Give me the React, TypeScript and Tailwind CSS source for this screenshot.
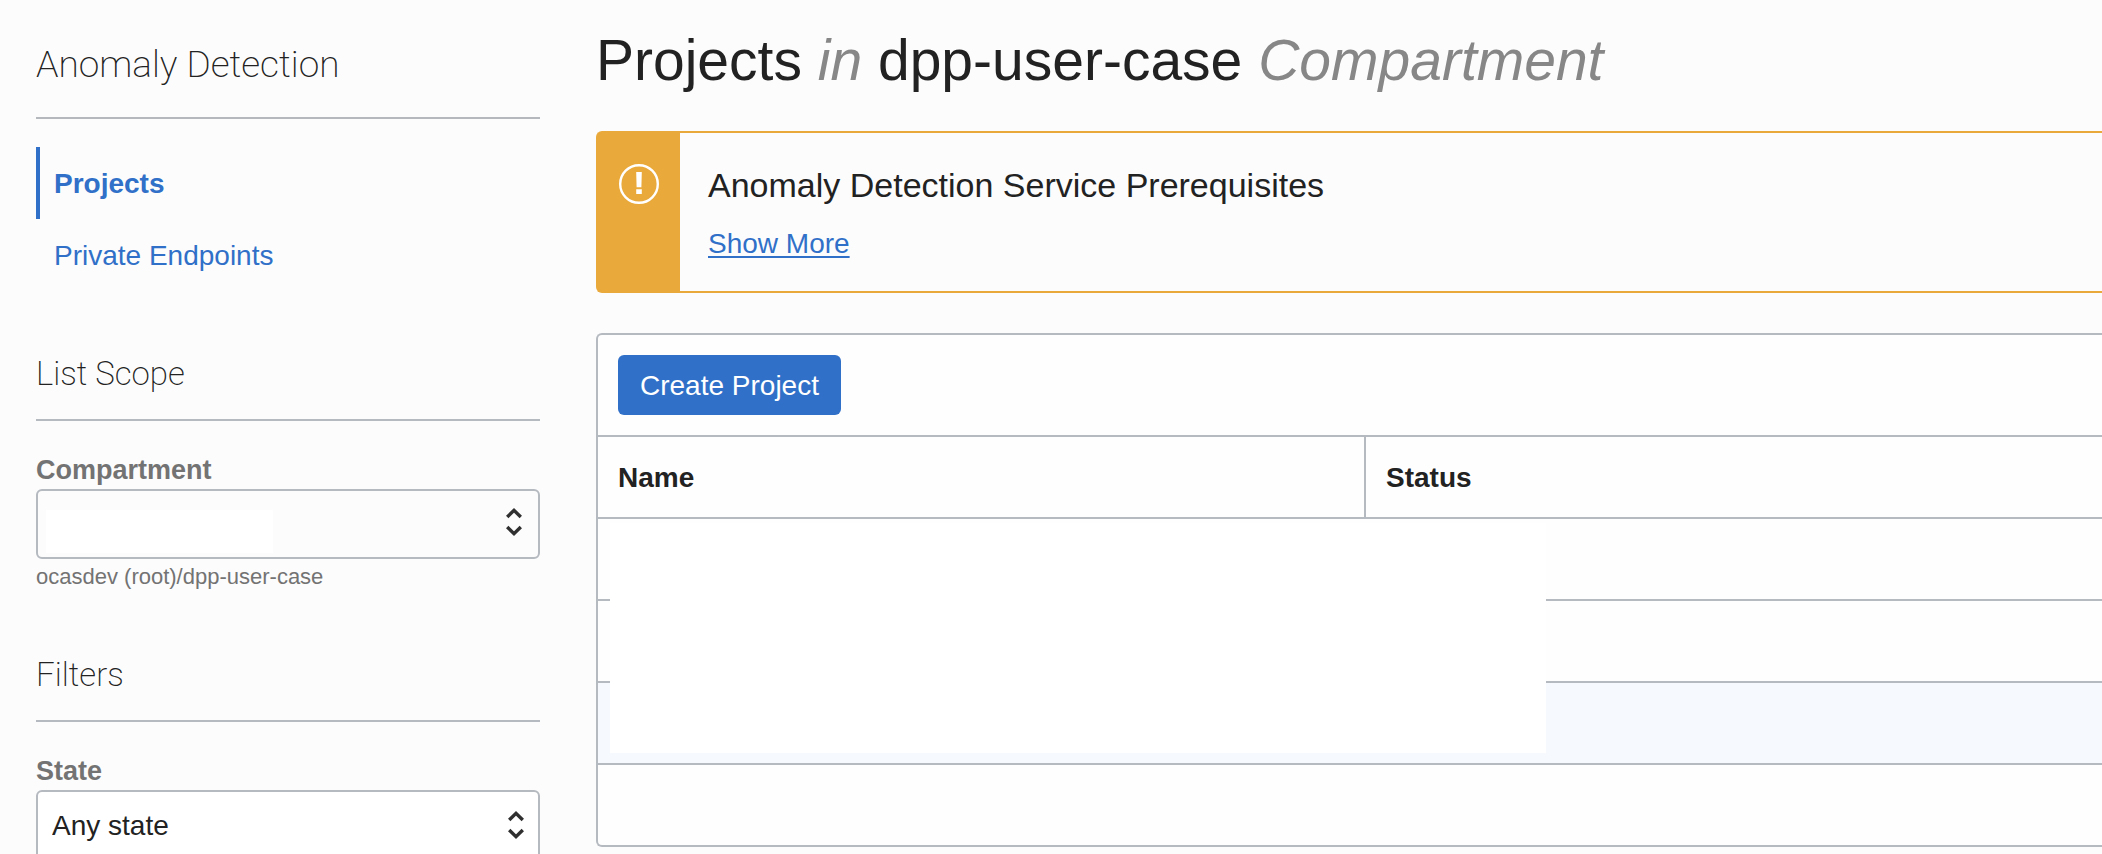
import React from "react";
import type { ReactNode } from "react";

const rows = [
  { id: 1, highlighted: false },
  { id: 2, highlighted: false },
  { id: 3, highlighted: true },
  { id: 4, highlighted: false },
];

function SortArrows() {
  return (
    <svg
      width="16"
      height="28"
      viewBox="0 0 16 28"
      fill="none"
      stroke="#303030"
      strokeWidth="3.4"
      aria-hidden="true"
    >
      <path d="M1.2 9 8 2.4 14.8 9" />
      <path d="M1.2 19 8 25.6l6.8-6.6" />
    </svg>
  );
}

function WarningIcon() {
  return (
    <svg width="40" height="40" viewBox="0 0 40 40" aria-hidden="true">
      <circle cx="20" cy="20" r="18.8" fill="none" stroke="#fff" strokeWidth="2.4" />
      <path d="M17.2 8h5.6l-.4 15.2h-4.8zM17.2 25.2h5.6V30h-5.6z" fill="#fff" />
    </svg>
  );
}

function SectionHeading({ children }: { children: ReactNode }) {
  return (
    <h3 className="mt-[59px] mb-[31px] border-b-2 border-[#b5b9c0] pb-[21px] font-['Roboto',sans-serif] text-[33px] leading-[48px] font-extralight">
      {children}
    </h3>
  );
}

export default function App() {
  return (
    <div className="flex h-screen gap-14 overflow-hidden bg-[#fcfcfc] pl-9 font-['Liberation_Sans',Arial,sans-serif] text-[28px] leading-9 text-[#222]">
      <aside className="w-[504px] shrink-0 pt-[37px]">
        <h2 className="mb-7 border-b-2 border-[#b5b9bd] pb-6 font-['Roboto',sans-serif] text-[37px] leading-[56px] font-extralight">
          Anomaly Detection
        </h2>
        <nav className="flex flex-col text-[#3070c8]">
          <a
            href="#projects"
            aria-current="page"
            className="border-l-4 border-[#3070c8] pt-[19px] pb-[17px] pl-3.5 font-bold"
          >
            Projects
          </a>
          <a
            href="#private-endpoints"
            className="border-l-4 border-transparent pt-[19px] pb-[17px] pl-3.5"
          >
            Private Endpoints
          </a>
        </nav>

        <SectionHeading>List Scope</SectionHeading>
        <label htmlFor="compartment" className="block text-[27px] font-bold text-[#737373]">
          Compartment
        </label>
        <button
          id="compartment"
          type="button"
          className="mt-px flex h-[70px] w-full items-center justify-between rounded-md border-2 border-[#b5b9c0] pr-4 pl-2"
        >
          <span className="mt-3.5 h-[43px] w-[227px] bg-white" />
          <span className="pb-1">
            <SortArrows />
          </span>
        </button>
        <p className="mt-[3px] text-[22px] leading-[30px] text-[#737373]">
          ocasdev (root)/dpp-user-case
        </p>

        <SectionHeading>Filters</SectionHeading>
        <label htmlFor="state" className="block text-[27px] font-bold text-[#737373]">
          State
        </label>
        <div className="mt-px grid items-center">
          <select
            id="state"
            className="col-start-1 row-start-1 h-[70px] w-full appearance-none rounded-md border-2 border-[#b5b9c0] bg-white pt-0.5 pl-3.5"
          >
            <option>Any state</option>
          </select>
          <span className="pointer-events-none col-start-1 row-start-1 justify-self-end pr-4">
            <SortArrows />
          </span>
        </div>
      </aside>

      <main className="min-w-0 flex-1 pt-7">
        <h1 className="text-[57px] leading-[64px] whitespace-nowrap">
          Projects <em className="text-[#878787]">in</em> dpp-user-case{" "}
          <em className="text-[#878787]">Compartment</em>
        </h1>

        <section className="mt-[39px] flex rounded-l-md border-y-2 border-l-2 border-[#e9a93b] bg-[#e9a93b]">
          <div className="flex w-[82px] shrink-0 justify-center pt-[31px]">
            <WarningIcon />
          </div>
          <div className="flex-1 bg-[#fcfcfc] pt-[30px] pb-[29px] pl-7">
            <h2 className="text-[34px] leading-[44px]">Anomaly Detection Service Prerequisites</h2>
            <a
              href="#prerequisites"
              className="mt-[19px] inline-block align-top text-[#3070c8] underline decoration-2 underline-offset-[3px]"
            >
              Show More
            </a>
          </div>
        </section>

        <section className="mt-10 rounded-l-md border-y-2 border-l-2 border-[#b5b9c0] bg-[#fefefe]">
          <div className="border-b-2 border-[#b5b9c0] p-5">
            <button
              type="button"
              className="block rounded-md bg-[#3070c8] px-[22px] pt-[13px] pb-[11px] text-white"
            >
              Create Project
            </button>
          </div>
          <div className="relative">
            <table className="w-full table-fixed border-separate border-spacing-0 text-left">
              <thead>
                <tr className="h-[82px]">
                  <th className="w-[768px] border-r-2 border-b-2 border-[#b5b9c0] px-5 pt-0.5 pb-0">
                    Name
                  </th>
                  <th className="border-b-2 border-[#b5b9c0] px-5 pt-0.5 pb-0">Status</th>
                </tr>
              </thead>
              <tbody>
                {rows.map((row, i) => {
                  const last = i === rows.length - 1;
                  const cell = last ? "p-0" : "border-b-2 border-[#b5b9c0] p-0";
                  return (
                    <tr
                      key={row.id}
                      className={`${last ? "h-20" : "h-[82px]"} ${row.highlighted ? "bg-[#f6fafe]" : ""}`}
                    >
                      <td className={cell} />
                      <td className={cell} />
                    </tr>
                  );
                })}
              </tbody>
            </table>
            <div className="absolute top-[86px] left-3 h-[230px] w-[936px] bg-white" />
          </div>
        </section>
      </main>
    </div>
  );
}
